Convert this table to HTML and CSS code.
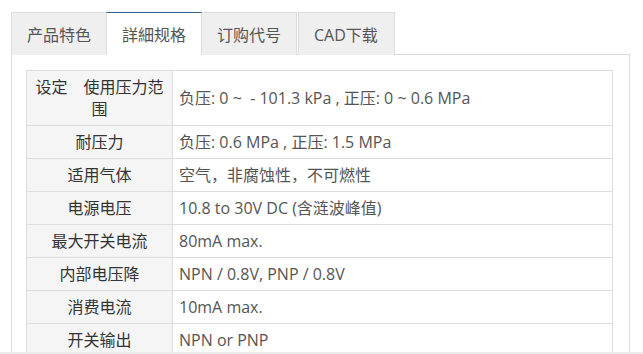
FILE: index.html
```html
<!DOCTYPE html>
<html lang="zh-CN">
<head>
<meta charset="utf-8">
<title>詳細规格</title>
<link rel="stylesheet" href="styles.css">
</head>
<body>
<div class="page">
  <div class="tabs-wrap">
    <ul class="tabs">
      <li class="tab">产品特色</li>
      <li class="tab active">詳細规格</li>
      <li class="tab">订购代号</li>
      <li class="tab">CAD下载</li>
    </ul>
    <div class="panel">
      <table class="spec">
        <tr><th>设定　使用压力范围</th><td>负压: 0 ~ &nbsp;- 101.3 kPa , 正压: 0 ~ 0.6 MPa</td></tr>
        <tr><th>耐压力</th><td>负压: 0.6 MPa , 正压: 1.5 MPa</td></tr>
        <tr><th>适用气体</th><td>空气，非腐蚀性，不可燃性</td></tr>
        <tr><th>电源电压</th><td>10.8 to 30V DC (含涟波峰值)</td></tr>
        <tr><th>最大开关电流</th><td>80mA max.</td></tr>
        <tr><th>内部电压降</th><td>NPN / 0.8V, PNP / 0.8V</td></tr>
        <tr><th>消费电流</th><td>10mA max.</td></tr>
        <tr><th>开关输出</th><td>NPN or PNP</td></tr>
      </table>
    </div>
  </div>
</div>
</body>
</html>
```
FILE: styles.css
```css
html, body {
  margin: 0;
  padding: 0;
  background: #fff;
}
body {
  font-family: "Open Sans", "Noto Sans CJK SC", sans-serif;
  font-size: 16px;
  color: #555;
}
.page {
  height: 352px;
  overflow: hidden;
  border-bottom: 2px solid #ececec;
}
.tabs-wrap {
  padding: 12px 13px 0 11px;
}
.tabs {
  list-style: none;
  margin: 0;
  padding: 0;
  display: flex;
  height: 42px;
}
.tab {
  box-sizing: border-box;
  height: 43px;
  padding: 2px 15px 0;
  border: 1px solid #dcdcdc;
  border-bottom: none;
  background: #efefef;
  display: flex;
  align-items: center;
  line-height: 22px;
  color: #555;
  white-space: nowrap;
  width: 96px;
}
.tab + .tab {
  margin-left: -1px;
}
.tab:last-child {
  margin-left: 1px;
  width: 97px;
}
.tab.active {
  background: #fff;
  border-top-color: #3c5f92;
  position: relative;
  z-index: 1;
}
.panel {
  border: 1px solid #dcdcdc;
  padding: 15px 16px 20px 14px;
  background: #fff;
}
.spec {
  width: 100%;
  border-collapse: collapse;
}
.spec th,
.spec td {
  border: 1px solid #dddddd;
  padding: 5px 6px;
  line-height: 22px;
  vertical-align: middle;
  font-size: 16px;
}
.spec th {
  width: 133px;
  background: #f5f5f5;
  color: #333;
  font-weight: normal;
  text-align: center;
}
.spec td {
  color: #555;
  text-align: left;
}
```
